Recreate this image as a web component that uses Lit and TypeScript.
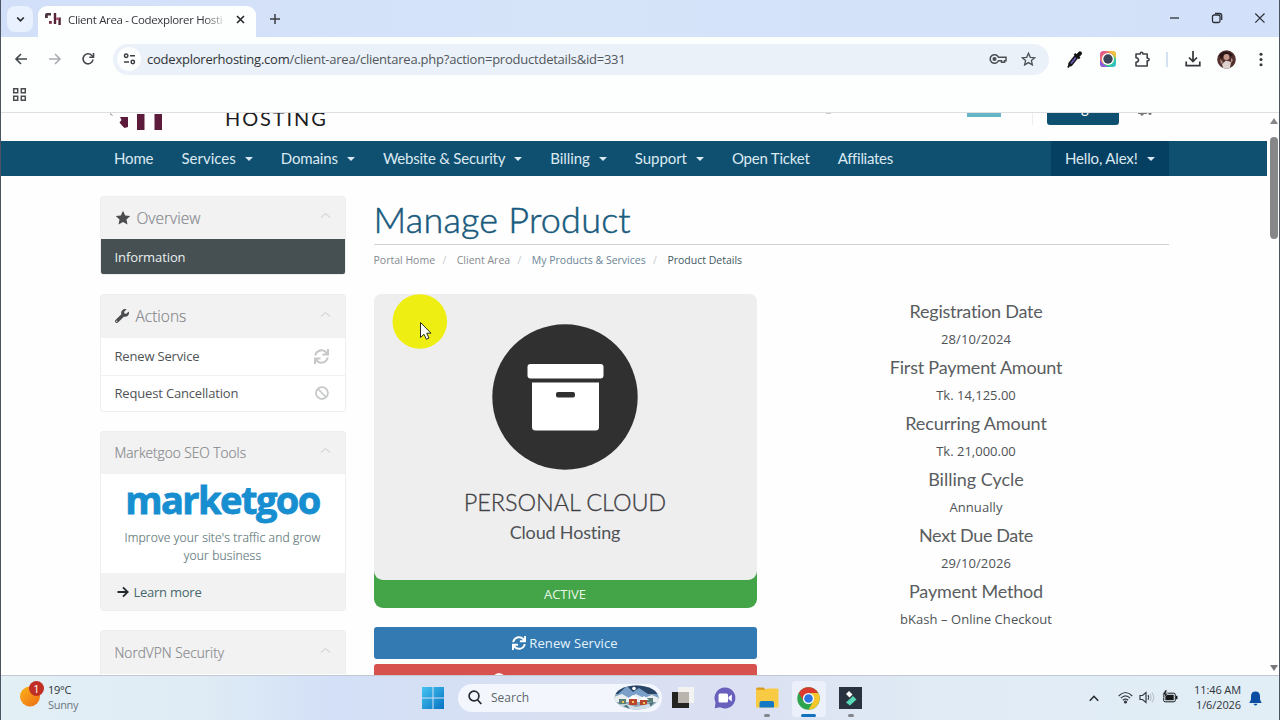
import { LitElement, html, svg, css, nothing } from "lit";
import { customElement, property } from "lit/decorators.js";
import { classMap } from "lit/directives/class-map.js";

interface MenuItem { label: string; track: number; menu?: boolean }
interface Detail { label: string; track: number; value: string; valueTrack: number }

const MENU: MenuItem[] = [
  { label: "Home", track: -0.15 },
  { label: "Services", track: 0.02, menu: true },
  { label: "Domains", track: -0.14, menu: true },
  { label: "Website & Security", track: -0.23, menu: true },
  { label: "Billing", track: -0.05, menu: true },
  { label: "Support", track: -0.07, menu: true },
  { label: "Open Ticket", track: -0.2 },
  { label: "Affiliates", track: -0.3 },
];

const DETAILS: Detail[] = [
  { label: "Registration Date", track: -0.26, value: "28/10/2024", valueTrack: 0.1 },
  { label: "First Payment Amount", track: -0.21, value: "Tk. 14,125.00", valueTrack: 0 },
  { label: "Recurring Amount", track: -0.11, value: "Tk. 21,000.00", valueTrack: 0 },
  { label: "Billing Cycle", track: 0, value: "Annually", valueTrack: 0.1 },
  { label: "Next Due Date", track: -0.37, value: "29/10/2026", valueTrack: 0.1 },
  { label: "Payment Method", track: -0.18, value: "bKash – Online Checkout", valueTrack: 0.05 },
];

const refresh = svg`<path d="M440.65 12.57l4 82.77A247.16 247.16 0 0 0 255.83 8C134.73 8 33.91 94.92 12.29 209.82A12 12 0 0 0 24.09 224h49.05a12 12 0 0 0 11.67-9.26 175.91 175.91 0 0 1 317-56.94l-101.46-4.86a12 12 0 0 0-12.57 12v47.41a12 12 0 0 0 12 12H500a12 12 0 0 0 12-12V12a12 12 0 0 0-12-12h-47.37a12 12 0 0 0-11.98 12.57zM255.83 432a175.61 175.61 0 0 1-146-77.8l101.8 4.87a12 12 0 0 0 12.57-12v-47.4a12 12 0 0 0-12-12H12a12 12 0 0 0-12 12V500a12 12 0 0 0 12 12h47.35a12 12 0 0 0 12-12.6l-4.15-82.57A247.17 247.17 0 0 0 255.83 504c121.11 0 221.93-86.92 243.55-201.82a12 12 0 0 0-11.8-14.18h-49.05a12 12 0 0 0-11.67 9.26A175.86 175.86 0 0 1 255.83 432z"/>`;
const ban = svg`<path d="M256 8C119 8 8 119 8 256s111 248 248 248 248-111 248-248S393 8 256 8zm130.1 117.9c65.5 65.500 70 165.700 20.500 236.600L149.500 105.400c71.100-49.600 171.200-44.800 236.600 20.500zM125.900 386.100c-65.500-65.500-70-165.700-20.500-236.600l257.100 257.100c-71.100 49.600-171.200 44.800-236.600-20.500z"/>`;

@customElement("browser-chrome")
class BrowserChrome extends LitElement {
  static styles = css`
    :host { display: block; font-family: "Open Sans", sans-serif; color: #35383c; }
    svg { display: block; flex: none; }
    .strip { height: 37px; display: flex; align-items: flex-start; background: linear-gradient(90deg, #d2dff8, #d6e4fa 45%, #d2e0f9); padding-left: 6px; }
    .search { width: 26px; height: 26px; margin-top: 6px; border-radius: 8px; background: #e8f1fd; display: grid; place-items: center; }
    .tab { margin: 6px 0 0 5px; height: 31px; width: 218px; background: #fdfefe; border-radius: 9px 9px 0 0; display: flex; align-items: center; padding-bottom: 5px; box-sizing: border-box; padding-left: 7px; }
    .title { margin-left: 6px; width: 160px; font-size: 11.5px; letter-spacing: -0.36px; white-space: nowrap; -webkit-mask-image: linear-gradient(90deg, #000 136px, transparent 160px); }
    .close { margin-left: 8px; }
    .plus { margin: 14px 0 0 14px; }
    .windows { margin-left: auto; display: flex; gap: 31px; padding: 12px 13px 0 0; align-items: center; }
    .bar { height: 43px; background: #fdfefe; display: flex; align-items: center; padding-left: 12px; padding-top: 1px; box-sizing: border-box; }
    .back { margin-right: 18px; } .fwd { margin-right: 18px; }
    .omni { margin-left: 18px; width: 936px; height: 31px; border-radius: 16px; background: #eaf1f9; display: flex; align-items: center; padding: 0 13px 0 4px; box-sizing: border-box; }
    .site { width: 24px; height: 24px; border-radius: 50%; background: #fdfefe; display: grid; place-items: center; }
    .url { margin-left: 6px; font-size: 13px; letter-spacing: -0.23px; white-space: nowrap; color: #52575c; }
    .host { color: #303336; }
    .key { margin-left: auto; } .star { margin-left: 14px; }
    .tools { display: flex; align-items: center; margin-left: 18px; }
    .lens { margin-left: 17px; } .puzzle { margin-left: 18px; } .face { margin-left: 16px; } .dots { margin-left: 23px; }
    .rule { width: 2px; height: 15px; background: #d4e1f0; margin: 0 17px 0 15px; }
    .marks { height: 33px; background: #fdfefe; border-bottom: 1px solid #dddfe1; padding: 7px 0 0 11px; box-sizing: border-box; }
  `;
  render() {
    return html`
      <div class="strip">
        <div class="search"><svg width="9" height="7" viewBox="0 0 9 7" fill="none" stroke="#26292c" stroke-width="1.7"><path d="M1.200 1.500 4.500 4.800 7.800 1.500"/></svg></div>
        <div class="tab">
          <svg width="17" height="14" viewBox="0 0 17 14"><path d="M0 6V3Q0 1 2 1H6V3.500H2.800V6Z" fill="#4a3440"/><path d="M4 9h2.800v2.800H4z" fill="#7c2943"/><path d="M8.800 1h2.400v11H8.800zM13.400 5.500H15.800V13h-2.400z" fill="#552338"/><path d="M11.200 5.500h2.200v2.500h-2.200z" fill="#b14d66"/></svg>
          <span class="title">Client Area - Codexplorer Hosti</span>
          <svg class="close" width="9" height="9" viewBox="0 0 9 9" stroke="#26292c" stroke-width="1.600"><path d="M1 1 8 8M8 1 1 8"/></svg>
        </div>
        <svg class="plus" width="10" height="10" viewBox="0 0 10 10" stroke="#3a3d40" stroke-width="1.500"><path d="M5 0V10M0 5H10"/></svg>
        <div class="windows">
          <svg width="11" height="12" viewBox="0 0 11 12" stroke="#2b3036" stroke-width="1.300"><path d="M1 6H10"/></svg>
          <svg width="12" height="12" viewBox="0 0 12 12" fill="none" stroke="#2b3036" stroke-width="1.300"><rect x="1.500" y="3" width="7.500" height="7.500" rx="1.500"/><path d="M4 1.500h4.500q2.200 0 2.200 2.200V8"/></svg>
          <svg width="12" height="12" viewBox="0 0 12 12" stroke="#2b3036" stroke-width="1.200"><path d="M1.300 1.500 10.500 10.700M10.500 1.500 1.300 10.700"/></svg>
        </div>
      </div>
      <div class="bar">
        <svg class="back" width="16" height="14" viewBox="0 0 16 14" fill="none" stroke="#43474b" stroke-width="1.600"><path d="M14 7H3M8 2 3 7 8 12"/></svg>
        <svg class="fwd" width="16" height="14" viewBox="0 0 16 14" fill="none" stroke="#a9adb0" stroke-width="1.600"><path d="M2 7H13M8 2 13 7 8 12"/></svg>
        <svg width="14" height="14" viewBox="0 0 14 14" fill="none" stroke="#43474b" stroke-width="1.600"><path d="M12 7.500A5 5 0 1 1 10.800 3.500L12.300 5"/><path d="M12.500 1V5.200H8.300"/></svg>
        <div class="omni">
          <span class="site"><svg width="13" height="12" viewBox="0 0 13 12" fill="none" stroke="#3c4043" stroke-width="1.500"><circle cx="3.200" cy="2.800" r="1.700"/><path d="M7 2.800h5M1 9h5"/><circle cx="9.800" cy="9" r="1.700"/></svg></span>
          <span class="url"><span class="host">codexplorerhosting.com</span>/client-area/clientarea.php?action=productdetails&amp;id=331</span>
          <svg class="key" width="18" height="12" viewBox="0 0 18 12" fill="none" stroke="#4b5054" stroke-width="1.500"><path d="M9.400 4.300A4.300 4.300 0 1 0 9.400 7.700H12.500V9.300H15.500V7.700H17V4.300Z"/><circle cx="5.500" cy="6" r="1.300" fill="#4b5054"/></svg>
          <svg class="star" width="15" height="14" viewBox="0 0 15 14" fill="none" stroke="#4b5054" stroke-width="1.300"><path d="M7.500 1.200 9.300 5.300 13.700 5.700 10.400 8.600 11.400 12.900 7.500 10.600 3.600 12.900 4.600 8.600 1.300 5.700 5.700 5.300Z"/></svg>
        </div>
        <div class="tools">
          <svg width="16" height="18" viewBox="0 0 16 18"><path d="M3.500 14 9.500 6.500" stroke="#17171f" stroke-width="4.600" stroke-linecap="round"/><path d="M4 13.500 8.800 7.500" stroke="#6b5ab0" stroke-width="1.800"/><path d="M7.500 3.800 12.700 8.500" stroke="#111" stroke-width="2.200"/><path d="M10.500 6 13 3.300" stroke="#111" stroke-width="4" stroke-linecap="round"/><path d="M1 17.500 3 14" stroke="#111" stroke-width="1.800"/></svg>
          <svg class="lens" width="16" height="16" viewBox="0 0 16 16"><defs><linearGradient id="lens" x1="0" y1="0" x2="1" y2="1"><stop offset="0" stop-color="#e2439b"/><stop offset=".45" stop-color="#eb8a5b"/><stop offset=".6" stop-color="#48d06e"/><stop offset="1" stop-color="#20b9e8"/></linearGradient></defs><rect width="16" height="16" rx="3.500" fill="url(#lens)"/><path d="M0 8V12.500Q0 16 3.500 16H9Q2 14 0 8Z" fill="#8a5be8"/><path d="M7 0h5.500Q16 0 16 3.500V8Q13 2 7 0Z" fill="#f4c23c"/><circle cx="8" cy="8" r="6.100" fill="#fff"/><circle cx="8" cy="8" r="4.700" fill="#3b4558"/></svg>
          <svg class="puzzle" width="17" height="17" viewBox="0 0 17 17" fill="none" stroke="#3f4347" stroke-width="1.600"><path d="M2 3H6.300V2.500a1.300 1.300 0 0 1 2.600 0V3H13.200V7.300h.6a1.300 1.300 0 0 1 0 2.600H13.200V15H2V11.300Q4.500 11 4.500 9T2 6.700Z" stroke-linejoin="round"/></svg>
          <span class="rule"></span>
          <svg width="16" height="16" viewBox="0 0 16 16" fill="none" stroke="#33373a" stroke-width="1.700"><path d="M8 0V10M4 6.500 8 10.500 12 6.500M1.200 10.500V14.600H14.800V10.500"/></svg>
          <svg class="face" width="19" height="19" viewBox="0 0 19 19"><circle cx="9.500" cy="9.500" r="9.300" fill="#51302e"/><path d="M2 5Q9 -2 16 5L12 8 9 5 4 9Z" fill="#2c1718"/><circle cx="9.500" cy="7" r="3" fill="#c49a8a"/><path d="M5 14 9 10.500 14 12 13 18Q9 19.500 6 17.800Z" fill="#ddd0ce"/><path d="M3 9 6 12 4 14ZM14 8l2 2-2 3Z" fill="#b88f86"/></svg>
          <svg class="dots" width="4" height="15" viewBox="0 0 4 15" fill="#33373a"><circle cx="2" cy="2.200" r="1.500"/><circle cx="2" cy="7.500" r="1.500"/><circle cx="2" cy="12.800" r="1.500"/></svg>
        </div>
      </div>
      <div class="marks"><svg width="15" height="15" viewBox="0 0 15 15" fill="none" stroke="#4a4d50" stroke-width="1.500"><path d="M1.700 1.700h4v4h-4zM9.300 1.700h4v4h-4zM1.700 9.300h4v4h-4zM9.300 9.300h4v4h-4z"/></svg></div>
    `;
  }
}

@customElement("side-panel")
class SidePanel extends LitElement {
  @property() heading = "";
  @property({ type: Boolean }) large = false;
  static styles = css`
    :host { display: block; border: 1px solid #eeeeef; border-radius: 3px; box-sizing: border-box; background: #fff; overflow: hidden; font-family: "Open Sans", sans-serif; }
    .head { height: 42.500px; background: #f2f2f3; display: flex; align-items: center; padding: 0 14px; color: #87898c; font-weight: 300; font-size: 13.700px; }
    .head.large { font-size: 15.500px; }
    .text { -webkit-text-stroke: 0.200px #87898c; }
    .chev { margin: -4px 0 0 auto; }
  `;
  render() {
    return html`<div class=${classMap({ head: true, large: this.large })}>
        <slot name="icon"></slot><span class="text">${this.heading}</span>
        <svg class="chev" width="11" height="7" viewBox="0 0 11 7" fill="none" stroke="#d6d8d9" stroke-width="1.200"><path d="M1 5.500 5.500 1.500 10 5.500"/></svg>
      </div><slot></slot>`;
  }
}

@customElement("client-page")
class ClientPage extends LitElement {
  static styles = css`
    :host { display: flex; background: #fefefe; overflow: hidden; font-family: "Open Sans", sans-serif; font-size: 13px; color: #4f5356; }
    svg { display: block; flex: none; }
    .page { width: 1266px; height: 562px; overflow: hidden; }
    .top { height: 28px; display: flex; align-items: flex-start; padding-left: 109px; overflow: hidden; box-sizing: border-box; }
    .word { margin: -9px 0 0 61px; font: 400 20px/28px Lato, sans-serif; letter-spacing: 1.900px; color: #1d1d1f; width: 110px; }
    .speck { width: 5px; height: 1px; background: #c9cbcd; margin-left: 491px; }
    .teal { width: 34px; height: 4px; background: #66b5c6; margin-left: 136px; }
    .sep { width: 1px; height: 12px; background: #eceeef; margin-left: 31px; }
    .login { width: 72px; height: 12px; background: #0f5071; border-radius: 0 0 3px 3px; margin-left: 14px; overflow: hidden; font: 15px/18px Lato, sans-serif; color: #fff; display: flex; justify-content: center; align-items: flex-start; }
    .login span { margin-top: -15px; }
    .cart { margin-left: 19px; }
    nav { height: 35px; background: #0f5071; display: flex; align-items: center; padding-left: 99px; color: #dbe9f2; font: 15px/35px Lato, sans-serif; white-space: nowrap; }
    .item { display: flex; align-items: center; padding: 0 14px; }
    .label { padding-bottom: 1px; }
    .caret { margin-left: 9px; border: 4px solid transparent; border-top-color: #dbe9f2; border-bottom: 0; }
    .user { margin-left: auto; margin-right: 98px; background: #053f61; height: 35px; letter-spacing: -0.160px; width: 90px; justify-content: space-between; }
    .user .caret { margin-left: 0; }
    .body { display: grid; grid-template-columns: 246px 795px; column-gap: 28px; padding: 19.500px 0 0 98.500px; }
    aside { display: flex; flex-direction: column; gap: 19px; }
    .star { margin-right: 6px; } .wrench { margin-right: 7px; }
    .on { height: 36px; margin: 0 -1px -1px; padding: 0 0 1px 15px; background: #464f52; color: #e9eff0; display: flex; align-items: center; box-sizing: border-box; letter-spacing: -0.100px; }
    .row { height: 37px; display: flex; align-items: center; justify-content: space-between; padding: 0 15.500px 0 14px; box-sizing: border-box; letter-spacing: -0.170px; }
    .row + .row { height: 36px; border-top: 1px solid #f1f1f2; }
    .ad { height: 99px; text-align: center; display: flex; flex-direction: column; }
    .brand { font: 700 38px/50px "Open Sans", sans-serif; color: #168ed0; letter-spacing: -1.550px; -webkit-text-stroke: 0.800px #168ed0; }
    .ad p { margin: 5px 0 0; font-size: 12.100px; line-height: 18px; font-weight: 300; letter-spacing: 0.150px; color: #647a7c; -webkit-text-stroke: 0.200px #647a7c; }
    .more { height: 37px; background: #f2f2f3; display: flex; align-items: center; gap: 5px; padding-left: 16px; color: #47686a; letter-spacing: -0.250px; }
    h1 { margin: 0; height: 48.500px; border-bottom: 1px solid #cfd2d4; font: 300 36px/47px Lato, sans-serif; letter-spacing: 0.200px; color: #195a7d; -webkit-text-stroke: 0.500px #195a7d; box-sizing: content-box; }
    .crumbs { height: 29px; display: flex; align-items: center; font-size: 10.500px; color: #858a8e; }
    .crumbs i { font-style: normal; color: #c6c9cb; width: 21.700px; text-align: center; padding-right: 3px; box-sizing: border-box; }
    .blue { color: #6c8596; } .here { color: #41585f; }
    .cols { display: grid; grid-template-columns: 383px 385px; column-gap: 27px; padding-top: 20px; }
    .status { background: linear-gradient(transparent 50%, #44a548 50%); border-radius: 0 0 9px 9px; height: 314px; box-sizing: border-box; text-align: center; }
    .card { height: 286px; background: #eeeeef; border-radius: 7px 7px 9px 9px; display: flex; flex-direction: column; align-items: center; padding-top: 29px; box-sizing: border-box; color: #3f4144; font-family: Lato, sans-serif; }
    .name { font-size: 23.500px; line-height: 32px; margin-top: 15px; font-weight: 300; letter-spacing: -0.100px; -webkit-text-stroke: 0.300px #3f4144; }
    .kind { font-size: 18px; line-height: 28px; margin-top: 0; letter-spacing: -0.170px; color: #505356; }
    .active { line-height: 28px; color: #e9f7e9; font-size: 13px; }
    .btn { height: 32px; border-radius: 3px; display: flex; align-items: center; justify-content: center; gap: 3px; color: #e6f2fb; background: #337ab2; letter-spacing: 0.100px; }
    .renew { margin-top: 19px; } .cancel { margin-top: 5px; background: #d7514e; color: #fff; }
    .info { text-align: center; padding-top: 3px; }
    .info dl { margin: 0; }
    dt { font: 18px/28px Lato, sans-serif; color: #5a5d60; }
    dd { margin: 0; line-height: 28.100px; }
    .scroll { width: 12px; display: flex; flex-direction: column; align-items: center; padding: 5px 0 4px; box-sizing: border-box; margin-left: 1px; margin-right: -1px; }
    .up { border: 4.500px solid transparent; border-bottom: 6px solid #85878a; border-top: 0; }
    .down { border: 4.500px solid transparent; border-top: 6px solid #77797c; border-bottom: 0; margin-top: auto; }
    .thumb { width: 8px; height: 102px; border-radius: 4px; background: #858789; margin-top: 13px; }
  `;
  render() {
    return html`
      <div class="page">
        <div class="top">
          <svg width="54" height="17" viewBox="0 0 54 17" fill="#5d1b3b"><path d="M10 4H18V14L14.500 15 12 12.500 9.500 9.500 11.500 7Z"/><path d="M27 1H34.500V17H27ZM44.500 1H52V17H44.500Z"/><path d="M0 .5 2.500 2.500" stroke="#8d7680"/></svg>
          <span class="word">HOSTING</span>
          <span class="speck"></span><span class="teal"></span><span class="sep"></span>
          <span class="login"><span>Login</span></span>
          <svg class="cart" width="15" height="4" viewBox="0 0 15 4" fill="#777"><path d="M0 0h9v1H0z"/><circle cx="4" cy="1" r="1.700"/><circle cx="12" cy=".6" r="1.500"/></svg>
        </div>
        <nav>
          ${MENU.map((m) => html`<div class="item"><span class="label" style="letter-spacing:${m.track}px">${m.label}</span>${m.menu ? html`<span class="caret"></span>` : nothing}</div>`)}
          <div class="item user"><span class="label">Hello, Alex!</span><span class="caret"></span></div>
        </nav>
        <div class="body">
          <aside>
            <side-panel heading="Overview" large>
              <svg slot="icon" class="star" width="16" height="15" viewBox="0 0 16 15" fill="#4a4c4e"><path d="M8 .8 10.200 5.400 15.200 6 11.500 9.500 12.500 14.500 8 12.100 3.500 14.500 4.500 9.500 .8 6 5.800 5.400Z"/></svg>
              <div class="on">Information</div>
            </side-panel>
            <side-panel heading="Actions" large>
              <svg slot="icon" class="wrench" width="14" height="14" viewBox="0 0 512 512" fill="#4a4c4e"><path d="M507.700 109.100c-2.200-9-13.500-12.100-20.100-5.500l-74.400 74.400-67.900-11.300L334 98.900l74.400-74.400c6.600-6.600 3.400-17.900-5.700-20.200-47.400-11.700-99.600 .9-136.600 37.900-39.600 39.600-50.500 97.100-34.100 147.200L18.700 402.800c-25 25-25 65.500 0 90.500 25 25 65.500 25 90.500 0l213.200-213.200c50.100 16.700 107.500 5.700 147.400-34.200 37.100-37.100 49.700-89.300 37.900-136.800zM64 472c-13.300 0-24-10.700-24-24 0-13.300 10.700-24 24-24s24 10.700 24 24c0 13.300-10.700 24-24 24z"/></svg>
              <div class="row">Renew Service<svg width="15" height="15" viewBox="0 0 512 512" fill="#c5c7c8">${refresh}</svg></div>
              <div class="row">Request Cancellation<svg width="14" height="14" viewBox="0 0 512 512" fill="#c5c7c8">${ban}</svg></div>
            </side-panel>
            <side-panel heading="Marketgoo SEO Tools">
              <div class="ad"><span class="brand">marketgoo</span><p>Improve your site's traffic and grow<br>your business</p></div>
              <div class="more"><svg width="12" height="12" viewBox="0 0 12 12" fill="none" stroke="#26292b" stroke-width="1.800"><path d="M.5 6H10.500M6 1.300 10.700 6 6 10.700"/></svg>Learn more</div>
            </side-panel>
            <side-panel heading="NordVPN Security"><div class="ad"></div></side-panel>
          </aside>
          <main>
            <h1>Manage Product</h1>
            <div class="crumbs"><span>Portal Home</span><i>/</i><span>Client Area</span><i>/</i><span class="blue">My Products &amp; Services</span><i>/</i><span class="here">Product Details</span></div>
            <div class="cols">
              <section>
                <div class="status">
                  <div class="card">
                    <svg width="148" height="148" viewBox="0 0 148 148"><circle cx="74" cy="74" r="72.700" fill="#303031"/><g fill="#fff"><rect x="36.500" y="41" width="76" height="14.500" rx="3"/><path d="M41 59.500H108V104Q108 107.500 104.500 107.500H44.500Q41 107.500 41 104Z"/></g><rect x="65" y="69" width="19" height="5.500" rx="2" fill="#303031"/></svg>
                    <span class="name">PERSONAL CLOUD</span>
                    <span class="kind">Cloud Hosting</span>
                  </div>
                  <div class="active">ACTIVE</div>
                </div>
                <div class="btn renew"><svg width="14" height="14" viewBox="0 0 512 512" fill="#fff">${refresh}</svg>Renew Service</div>
                <div class="btn cancel"><svg width="14" height="14" viewBox="0 0 512 512" fill="#fff">${ban}</svg>Request Cancellation</div>
              </section>
              <section class="info"><dl>
                ${DETAILS.map((d) => html`<dt style="letter-spacing:${d.track}px">${d.label}</dt><dd style="letter-spacing:${d.valueTrack}px">${d.value}</dd>`)}
              </dl></section>
            </div>
          </main>
        </div>
      </div>
      <div class="scroll"><span class="up"></span><span class="thumb"></span><span class="down"></span></div>
    `;
  }
}

@customElement("task-bar")
class TaskBar extends LitElement {
  static styles = css`
    :host { display: grid; grid-template-columns: 420px 460px 1fr; height: 45.500px; box-sizing: border-box; border-top: 1px solid #c2c9d1; background: linear-gradient(90deg, #e2eff5 0, #dfecf5 200px, #d3e0f7 330px, #d8dff1 560px, #dbe1f2 760px, #e0ebf5 930px, #e2eef6 100%); font-family: "Open Sans", sans-serif; color: #2d3238; font-size: 11px; }
    svg { display: block; flex: none; }
    .weather { display: flex; padding: 5px 0 0 19px; }
    .temps { margin-left: 3px; line-height: 15px; padding-top: 1.500px; letter-spacing: -0.300px; }
    .sky { color: #6d7782; }
    .apps { display: flex; align-items: flex-start; padding-top: 5px; }
    .win { margin: 6px 0 0 1px; }
    .find { margin: 3px 0 0 14px; width: 204px; height: 28px; border-radius: 14px; background: #f3f7fd; display: flex; align-items: center; padding: 0 3px 0 10px; box-sizing: border-box; color: #5f656c; font-size: 12px; }
    .find span { margin-left: 9px; flex: 1; }
    .app { width: 34px; height: 36px; display: flex; flex-direction: column; align-items: center; padding-top: 6px; box-sizing: border-box; border-radius: 4px; margin-left: 7.900px; }
    .find + .app { margin-left: 4px; }
    .app.now { background: #ebf0fa; }
    .dot { width: 6px; height: 3px; border-radius: 2px; background: #82868c; margin-top: auto; }
    .now .dot { width: 15px; background: #1471bb; }
    .tray { display: flex; align-items: flex-start; padding-top: 5px; justify-content: flex-end; }
    .more { margin: 14px 19px 0 0; } .wifi { margin: 10px 6px 0 0; } .sound { margin: 10px 7px 0 0; } .power { margin-top: 9px; }
    .clock { text-align: right; line-height: 15px; padding-top: 1.500px; margin-left: 13px; width: 50px; letter-spacing: -0.100px; white-space: nowrap; }
    .bell { margin: 10px 17px 0 8px; }
  `;
  render() {
    return html`
      <div class="weather">
        <svg width="25" height="28" viewBox="0 0 25 28"><defs><linearGradient id="sun" x1="0" y1="0" x2="1" y2="1"><stop offset="0" stop-color="#fbb41c"/><stop offset="1" stop-color="#ee6b12"/></linearGradient></defs><circle cx="10" cy="15.500" r="10" fill="url(#sun)"/><circle cx="16.500" cy="7.500" r="7.500" fill="#c02f24"/><text x="16.500" y="11.500" font-size="11" fill="#fff" text-anchor="middle">1</text></svg>
        <div class="temps"><div>19°C</div><div class="sky">Sunny</div></div>
      </div>
      <div class="apps">
        <svg class="win" width="22" height="22" viewBox="0 0 22 22"><defs><linearGradient id="pane" x1="0" y1="0" x2="1" y2="1"><stop offset="0" stop-color="#46c4f2"/><stop offset="1" stop-color="#0673c2"/></linearGradient></defs><path d="M0 0H10.500V10.500H0ZM11.500 0H22V10.500H11.500ZM0 11.500H10.500V22H0ZM11.500 11.500H22V22H11.500Z" fill="url(#pane)"/></svg>
        <div class="find">
          <svg width="14" height="15" viewBox="0 0 14 15" fill="none" stroke="#26292d" stroke-width="1.700"><circle cx="6" cy="6" r="4.900"/><path d="M9.500 9.800 13.300 14"/></svg>
          <span>Search</span>
          <svg width="45" height="25" viewBox="0 0 45 25"><defs><clipPath id="vill"><ellipse cx="22.500" cy="12.500" rx="22" ry="12"/></clipPath></defs><g clip-path="url(#vill)"><path d="M0 0h45v25H0z" fill="#8fa7b6"/><path d="M0 0h45v9H0z" fill="#284467"/><path d="M3 10 13 1 19 7 25 3 37 11 45 8V14H0Z" fill="#7aa0c9"/><circle cx="20" cy="3.500" r="1.800" fill="#fff"/><path d="M0 12 8 9 15 13 22 9 30 13 38 10 45 13V17H0Z" fill="#e9eef2"/><path d="M5 14h7v5H5zM33 13h6v4H33z" fill="#5a7f76"/><path d="M15 14h8v6H15zM26 15h7v5H26z" fill="#b9452f"/><path d="M13 14 19 10 25 14ZM25 15 30 11 35 15Z" fill="#fff"/><path d="M18 16h2v2h-2zM29 17h2v2h-2zM8 16h2v2H8z" fill="#f2c65b"/><path d="M0 20 12 19 22 22 34 19 45 20V25H0Z" fill="#cfdde6"/><path d="M9 21 13 20 16 24M35 18l5-1-3 5Z" fill="#49707a"/></g></svg>
        </div>
        <div class="app"><svg width="22" height="21" viewBox="0 0 22 21"><path d="M6 0H22V16H6Z" fill="#f3f3f1"/><path d="M0 5H17V21H0Z" fill="#242322"/><path d="M6 5H17V16H6Z" fill="#b9b4ad"/></svg></div>
        <div class="app"><svg width="22" height="22" viewBox="0 0 22 22"><path d="M11 .5A10.500 10.500 0 1 1 6 20.300L.8 21.300 1.500 15.500A10.500 10.500 0 0 1 11 .5Z" fill="#6960bd"/><rect x="4.500" y="6.500" width="9.500" height="9" rx="1.500" fill="#fff"/><path d="M14.500 10 17.800 7.500V14.500L14.500 12Z" fill="#fff"/></svg></div>
        <div class="app"><svg width="24" height="21" viewBox="0 0 24 21"><path d="M1 2.500Q1 .5 3 .5H8.500L11 3H1Z" fill="#d99a1c"/><path d="M1 2.800H10L12 1.500H22Q23.500 1.500 23.500 3V20.500H1Z" fill="#f9cb45"/><path d="M4.500 20.500V16Q4.500 14 6.500 14H17Q19 14 19 16V20.500Z" fill="#1379c4"/></svg><span class="dot"></span></div>
        <div class="app now"><svg width="23" height="23" viewBox="0 0 23 23"><circle cx="11.500" cy="11.500" r="11.200" fill="#2ea44e"/><path d="M1.800 5.900A11.200 11.200 0 0 1 21.200 5.900H11.500L6.700 14.300Z" fill="#da3b2e"/><path d="M21.200 5.900A11.200 11.200 0 0 1 11.500 22.700L16.400 14.300 14 5.900Z" fill="#f6c62b"/><circle cx="11.500" cy="11.500" r="5.600" fill="#fff"/><circle cx="11.500" cy="11.500" r="4.300" fill="#2c74e2"/></svg><span class="dot"></span></div>
        <div class="app"><svg width="23" height="22" viewBox="0 0 23 22"><path d="M0 0H23V22H0Z" fill="#29333f"/><path d="M7 7 10 4 13.500 7.500 10.500 10.500Z" fill="#fff"/><path d="M7 15.500 14 9 17.500 12.500 11 18.500Z" fill="#56d9b4"/></svg><span class="dot"></span></div>
      </div>
      <div class="tray">
        <svg class="more" width="10" height="7" viewBox="0 0 10 7" fill="none" stroke="#25292e" stroke-width="1.500"><path d="M.8 5.800 5 1.300 9.200 5.800"/></svg>
        <svg class="wifi" width="15" height="13" viewBox="0 0 15 13" fill="none" stroke="#353a40" stroke-width="1.200"><path d="M.7 5Q7.500-2 14.300 5M2.800 7.200Q7.500 2.500 12.200 7.200M4.900 9.300Q7.500 6.900 10.100 9.300"/><circle cx="7.500" cy="11" r="1" fill="#353a40"/></svg>
        <svg class="sound" width="16" height="13" viewBox="0 0 16 13" fill="none" stroke="#353a40" stroke-width="1.200"><path d="M1 4.500H3.500L7 1.500V11.500L3.500 8.500H1Z"/><path d="M9 4.200Q10.500 6.500 9 8.800"/><path d="M11 3Q13 6.500 11 10M13 1.500Q16.500 6.500 13 11.500" stroke="#bcc4cb"/></svg>
        <svg class="power" width="16" height="13" viewBox="0 0 16 13"><rect x="1.700" y="3.200" width="11.600" height="8.600" rx="1.500" fill="none" stroke="#17191b"/><rect x="3.300" y="4.800" width="8.400" height="5.400" fill="#17191b"/><path d="M14.700 5.800v3.400" stroke="#17191b" stroke-width="1.500"/><path d="M3.300 0 .3 4.800H2.600L1.800 8 6 3.500H3.800L5.200 0Z" fill="#17191b" stroke="#e2eef6" stroke-width=".5"/></svg>
        <div class="clock"><div>11:46 AM</div><div>1/6/2026</div></div>
        <svg class="bell" width="13" height="15" viewBox="0 0 13 15" fill="#0b4da2"><path d="M6.500 .5Q11 .5 11 5.500V8.500L12.700 12H.3L2 8.500V5.500Q2 .5 6.500 .5ZM4.500 12.800H8.500Q8 14.600 6.500 14.600T4.500 12.800Z"/></svg>
      </div>
    `;
  }
}

@customElement("app-root")
class AppRoot extends LitElement {
  static styles = css`
    :host { display: flex; flex-direction: column; width: 1280px; height: 720px; box-sizing: border-box; position: relative; overflow: hidden; border-left: 1px solid #4b5460; border-right: 1px solid #4b5460; }
    browser-chrome { height: 113px; flex: none; }
    client-page { flex: 1; min-height: 0; }
    task-bar { flex: none; }
    .pointer { position: absolute; left: 391px; top: 294px; }
  `;
  render() {
    return html`<browser-chrome></browser-chrome><client-page></client-page><task-bar></task-bar>
      <svg class="pointer" width="56" height="56" viewBox="0 0 56 56"><circle cx="27.800" cy="27.500" r="27.300" fill="#eeee12"/><path d="M28.500 28.500V43.500L32 40.300 34.400 45.300 37 44 34.700 39.200H39Z" fill="#fff" stroke="#2b2b20" stroke-width="1"/></svg>`;
  }
}
